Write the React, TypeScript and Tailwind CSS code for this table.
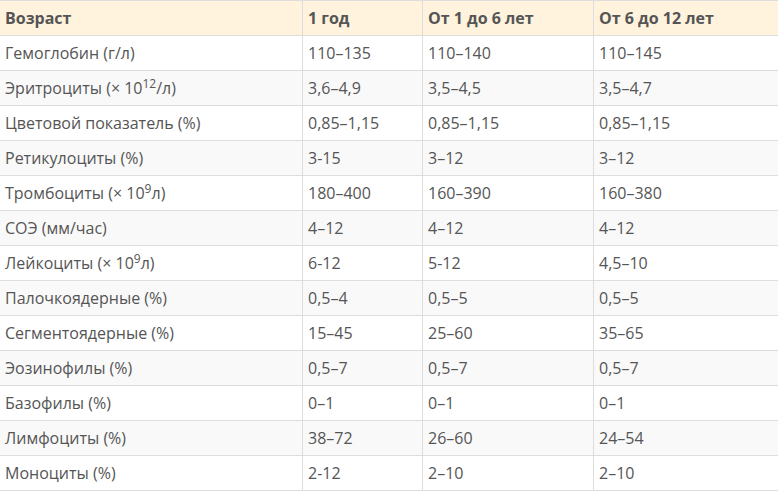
import React from "react";

const Sup = ({ children }: { children: React.ReactNode }) => (
  <sup className="text-[12px] relative -top-[6px] align-baseline">{children}</sup>
);

const rows: [React.ReactNode, string, string, string][] = [
  ["Гемоглобин (г/л)", "110–135", "110–140", "110–145"],
  [<>Эритроциты (× 10<Sup>12</Sup>/л)</>, "3,6–4,9", "3,5–4,5", "3,5–4,7"],
  ["Цветовой показатель (%)", "0,85–1,15", "0,85–1,15", "0,85–1,15"],
  ["Ретикулоциты (%)", "3-15", "3–12", "3–12"],
  [<>Тромбоциты (× 10<Sup>9</Sup>л)</>, "180–400", "160–390", "160–380"],
  ["СОЭ (мм/час)", "4–12", "4–12", "4–12"],
  [<>Лейкоциты (× 10<Sup>9</Sup>л)</>, "6-12", "5-12", "4,5–10"],
  ["Палочкоядерные (%)", "0,5–4", "0,5–5", "0,5–5"],
  ["Сегментоядерные (%)", "15–45", "25–60", "35–65"],
  ["Эозинофилы (%)", "0,5–7", "0,5–7", "0,5–7"],
  ["Базофилы (%)", "0–1", "0–1", "0–1"],
  ["Лимфоциты (%)", "38–72", "26–60", "24–54"],
  ["Моноциты (%)", "2-12", "2–10", "2–10"],
];

function Row({ cells, bg, bold, last }: { cells: React.ReactNode[]; bg: string; bold?: boolean; last?: boolean }) {
  return (
    <div
      className={`grid grid-cols-[302px_120px_171px_1fr] h-[35px] border-t border-[#dddddd] ${last ? "border-b h-[36px]" : ""} ${bg}`}
    >
      {cells.map((c, i) => (
        <div
          key={i}
          className={`flex items-center pl-[5px] whitespace-nowrap ${i > 0 ? "border-l border-[#dddddd]" : ""} ${bold ? "font-bold" : ""}`}
        >
          <span>{c}</span>
        </div>
      ))}
    </div>
  );
}

export default function App() {
  return (
    <div
      className="w-[778px] h-[491px] overflow-hidden bg-white text-[16px] leading-[24px] text-[#555555]"
      style={{ fontFamily: '"Open Sans", "Noto Sans", sans-serif' }}
    >
      <Row cells={["Возраст", "1 год", "От 1 до 6 лет", "От 6 до 12 лет"]} bg="bg-[#fff3dd]" bold />
      {rows.map((r, i) => (
        <Row key={i} cells={r} bg={i % 2 === 0 ? "bg-white" : "bg-[#f9f9f9]"} last={i === rows.length - 1} />
      ))}
    </div>
  );
}
